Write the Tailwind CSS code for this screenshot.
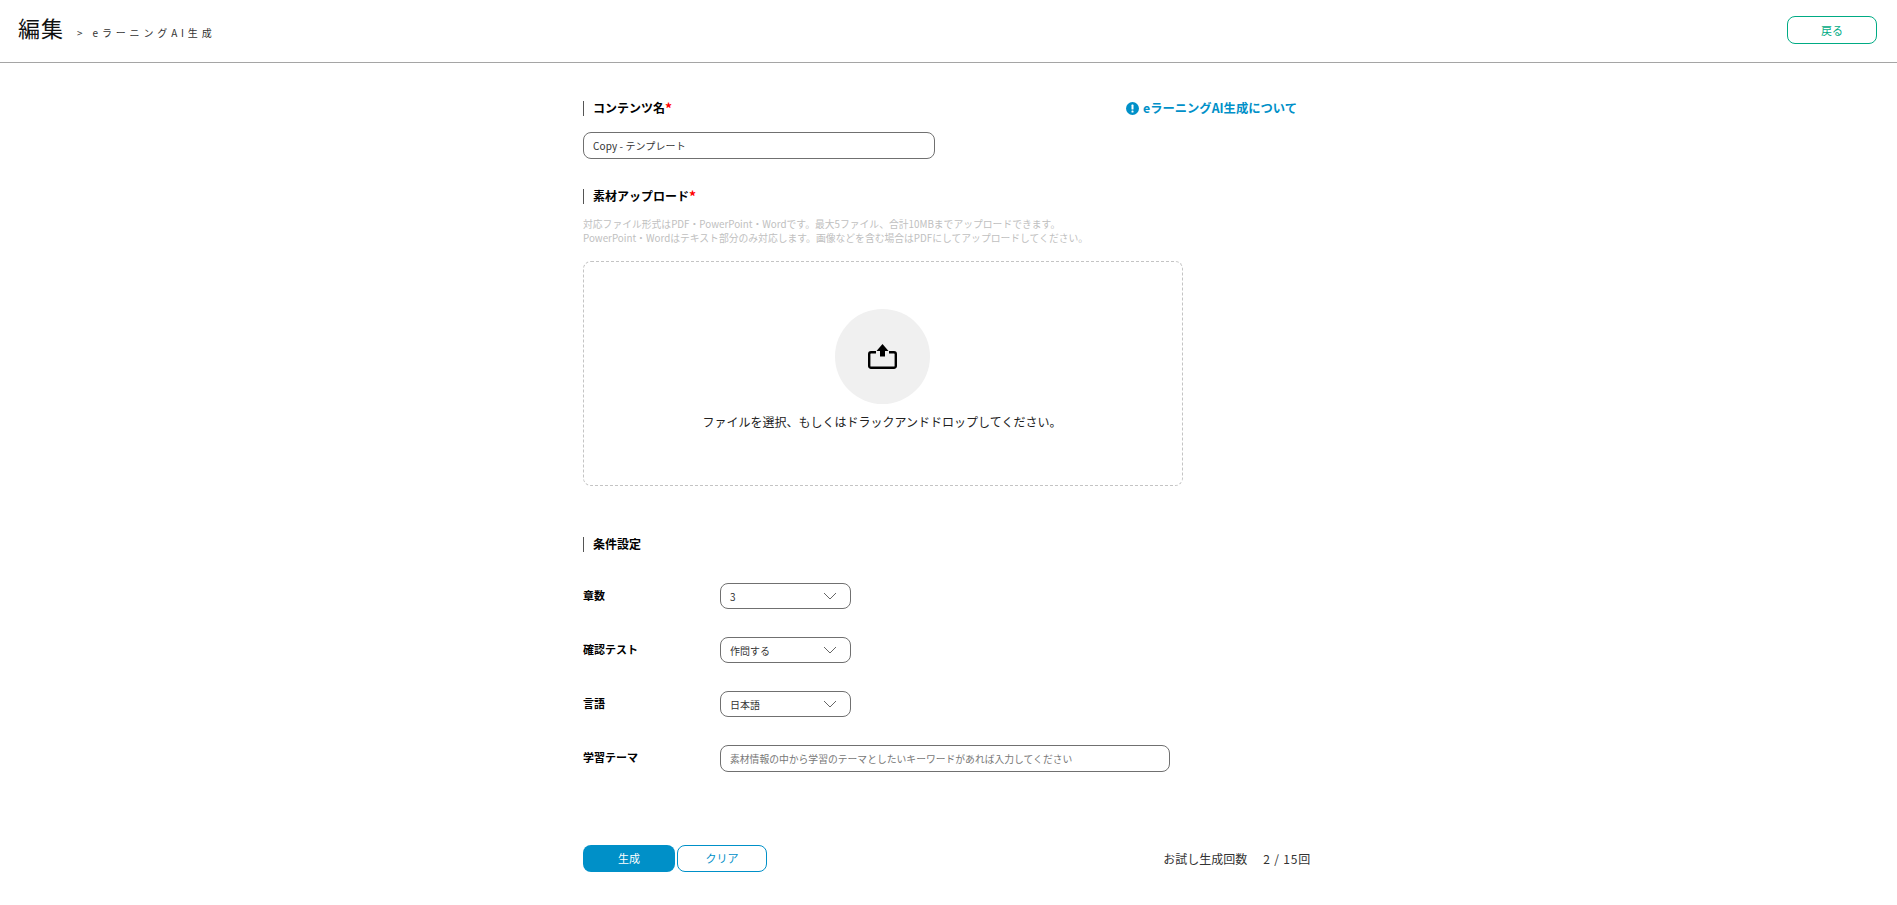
<!DOCTYPE html>
<html lang="ja">
<head>
  <meta charset="UTF-8">
  <meta name="viewport" content="width=device-width, initial-scale=1.0">
  <title>編集 - eラーニングAI生成</title>
  <script src="https://cdn.jsdelivr.net/npm/@tailwindcss/browser@4"></script>
</head>
<body class="bg-white text-black font-['Noto_Sans_CJK_JP',sans-serif] overflow-hidden">
  <!-- header -->
  <header class="h-[63px] border-b border-[#a5a5a5] flex items-center justify-between pl-[18px] pr-5">
    <div class="flex items-center">
      <h1 class="text-[22px] leading-none tracking-[1px] text-[#111] mb-[8px]">編集</h1>
      <span class="ml-[13px] mt-[4px] text-[10px] leading-none tracking-[3.85px] text-[#333]">&gt; eラーニングAI生成</span>
    </div>
    <button class="w-[90px] h-7 mb-[2px] rounded-lg border border-[#00ab84] text-[#00ab84] text-[11px] bg-white">戻る</button>
  </header>

  <main class="pl-[583px] pt-[38px]">
    <!-- content name -->
    <div class="flex w-[714px] justify-between items-start">
      <h2 class="border-l border-[#555] pl-[9px] pb-[2px] h-[15px] flex items-center text-xs font-bold">コンテンツ名<span class="text-sm leading-none text-[#f00]">*</span></h2>
      <a class="flex items-center gap-[4px] text-[12.3px] leading-[15px] font-bold text-[#0090c8]">
        <svg class="w-[13px] h-[13px]" viewBox="0 0 13 13"><circle cx="6.5" cy="6.5" r="6.5" fill="#0090c8"/><rect x="5.500" y="2.600" width="2" height="5" rx="0.600" fill="#fff"/><rect x="5.500" y="8.500" width="2" height="2" rx="0.600" fill="#fff"/></svg>
        eラーニングAI生成について
      </a>
    </div>
    <input value="Copy - テンプレート" class="block mt-4 w-[352px] h-[27px] rounded-lg border border-[#707070] px-[9px] text-[10px] tracking-[0.1px] text-[#333] outline-none">

    <!-- upload -->
    <h2 class="mt-[30px] border-l border-[#555] pl-[9px] pb-[2px] h-[15px] flex items-center text-xs font-bold">素材アップロード<span class="text-sm leading-none text-[#f00]">*</span></h2>
    <p class="mt-[13px] text-[9.8px] leading-[14px] text-[#c0c0c0]">対応ファイル形式はPDF・PowerPoint・Wordです。最大5ファイル、合計10MBまでアップロードできます。<br>PowerPoint・Wordはテキスト部分のみ対応します。画像などを含む場合はPDFにしてアップロードしてください。</p>
    <div class="mt-4 w-[600px] h-[225px] rounded-lg border border-dashed border-[#c4c4c4] flex flex-col items-center pt-[47px]">
      <div class="w-[95px] h-[95px] mr-[2px] rounded-full bg-[#f0f0f0] flex items-center justify-center">
        <svg class="w-[29px] h-[25px]" viewBox="0 0 29 25" fill="none">
          <path d="M8 8.200H3A1.800 1.800 0 0 0 1.200 10V22A1.800 1.800 0 0 0 3 23.800H26A1.800 1.800 0 0 0 27.800 22V10A1.800 1.800 0 0 0 26 8.200H21" stroke="#000" stroke-width="2.400"/>
          <path d="M14.500 0L20.500 7H17V12.500H12V7H8.500Z" fill="#000"/>
        </svg>
      </div>
      <p class="mt-2 mr-[2px] text-xs leading-5 text-[#222]">ファイルを選択、もしくはドラックアンドドロップしてください。</p>
    </div>

    <!-- conditions -->
    <h2 class="mt-[51px] border-l border-[#555] pl-[9px] pb-[2px] h-[15px] flex items-center text-xs font-bold">条件設定</h2>
    <div class="mt-[31px] flex flex-col gap-7">
      <div class="flex items-center h-[26px]">
        <span class="w-[137px] pb-[2px] text-[11px] font-bold">章数</span>
        <div class="w-[131px] h-[26px] rounded-lg border border-[#707070] flex items-center justify-between pl-[9px] pr-[13px] text-[10px] text-[#333]">3
          <svg class="w-[14px] h-2" viewBox="0 0 14 8" fill="none"><path d="M1 1L7 7L13 1" stroke="#666" stroke-width="1"/></svg>
        </div>
      </div>
      <div class="flex items-center h-[26px]">
        <span class="w-[137px] pb-[2px] text-[11px] font-bold">確認テスト</span>
        <div class="w-[131px] h-[26px] rounded-lg border border-[#707070] flex items-center justify-between pl-[9px] pr-[13px] text-[10px] text-[#333]">作問する
          <svg class="w-[14px] h-2" viewBox="0 0 14 8" fill="none"><path d="M1 1L7 7L13 1" stroke="#666" stroke-width="1"/></svg>
        </div>
      </div>
      <div class="flex items-center h-[26px]">
        <span class="w-[137px] pb-[2px] text-[11px] font-bold">言語</span>
        <div class="w-[131px] h-[26px] rounded-lg border border-[#707070] flex items-center justify-between pl-[9px] pr-[13px] text-[10px] text-[#333]">日本語
          <svg class="w-[14px] h-2" viewBox="0 0 14 8" fill="none"><path d="M1 1L7 7L13 1" stroke="#666" stroke-width="1"/></svg>
        </div>
      </div>
      <div class="flex items-center h-[27px]">
        <span class="w-[137px] pb-[2px] text-[11px] font-bold">学習テーマ</span>
        <input placeholder="素材情報の中から学習のテーマとしたいキーワードがあれば入力してください" class="w-[450px] h-[27px] rounded-lg border border-[#707070] px-[9px] text-[9.8px] placeholder:text-[#777] outline-none">
      </div>
    </div>

    <!-- actions -->
    <div class="mt-[73px] flex w-[728px] items-center justify-between">
      <div class="flex gap-[2px]">
        <button class="w-[92px] h-[27px] rounded-lg bg-[#0090c8] text-white text-[11px]">生成</button>
        <button class="w-[90px] h-[27px] rounded-lg border border-[#0090c8] bg-white text-[#0090c8] text-[11px]">クリア</button>
      </div>
      <div class="flex gap-4 text-xs text-[#333]">
        <span>お試し生成回数</span>
        <span class="tracking-[0.8px]">2 / 15回</span>
      </div>
    </div>
  </main>
</body>
</html>
